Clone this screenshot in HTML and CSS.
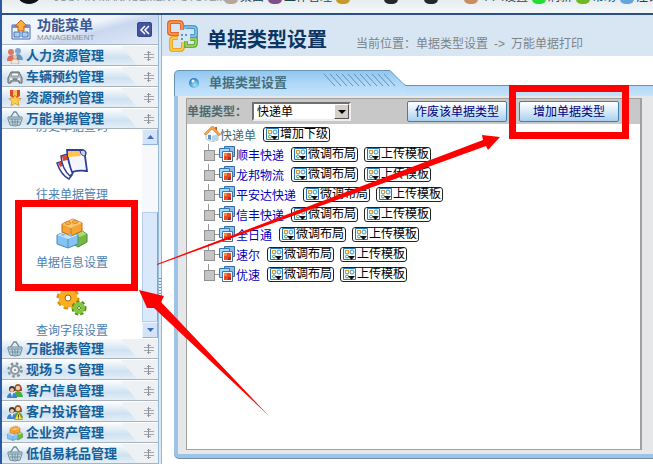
FILE: index.html
```
<!DOCTYPE html>
<html lang="zh-CN">
<head>
    <meta charset="UTF-8">
    <meta name="viewport" content="width=device-width, initial-scale=1.0">
    <title>单据类型设置</title>
    <link rel="stylesheet" href="styles.css">
</head>
<body>
    <!-- shared icons -->
    <svg class="defs" width="0" height="0">
        <defs>
            <linearGradient id="tabFill" x1="0" y1="0" x2="0" y2="1">
                <stop offset="0" stop-color="#8fc6f1"/>
                <stop offset="0.5" stop-color="#b0d8f8"/>
                <stop offset="1" stop-color="#c4e3fb"/>
            </linearGradient>
            <radialGradient id="ball" cx="0.6" cy="0.7" r="0.7">
                <stop offset="0" stop-color="#a5e4ff"/>
                <stop offset="1" stop-color="#2479b8"/>
            </radialGradient>
            <symbol id="basket" viewBox="0 0 16 16">
                <path d="M3 7 7 1h2l4 6" fill="none" stroke="#6d8796" stroke-width="1.3"/>
                <path d="M1 6h14v2l-2 6q-5 2-10 0L1 8z" fill="#c4d6df" stroke="#718b9b"/>
                <path d="M2 8h12M3 11h10M5 8l1 6M8 8v6M11 8l-1 6" stroke="#71909f" fill="none"/>
            </symbol>
            <symbol id="people" viewBox="0 0 16 16">
                <circle cx="4" cy="4" r="3" fill="#dc7667"/><path d="M0 13q0-6 5-6t5 6z" fill="#d8705c"/>
                <circle cx="11" cy="3" r="3" fill="#81a8cf"/><path d="M7 12q0-6 4-6t5 6z" fill="#6994bf"/>
                <circle cx="8" cy="9" r="2" fill="#f0c4a0"/><path d="M4 16q0-5 4-5t4 5z" fill="#f1e5db" stroke="#be8267" stroke-width=".5"/>
            </symbol>
            <symbol id="car" viewBox="0 0 16 16">
                <path d="m2 7 2-4h8l2 4 1 2v5h-3v-2H4v2H1V9z" fill="#b8bfc4" stroke="#59646d"/>
                <path d="m4 7 1-3h6l1 3z" fill="#f5f9fc" stroke="#59646d" stroke-width=".6"/>
                <path d="M3 10h2M11 10h2" stroke="#fff" stroke-width="1.5"/><path d="M6 10h4" stroke="#49545c"/>
            </symbol>
            <symbol id="medal" viewBox="0 0 16 16">
                <path d="M3 0h10v6L8 9 3 6z" fill="#dd492a"/><path d="M6 0h4v6H6z" fill="#fac25d"/>
                <path d="m8 5 2 3 4 .5-3 3 1 4-4-2-4 2 1-4-3-3L6 8z" fill="#ffd44b" stroke="#df8a25" stroke-width=".8"/>
            </symbol>
            <symbol id="gear" viewBox="0 0 16 16">
                <circle cx="8" cy="8" r="6.5" fill="none" stroke="#89939b" stroke-width="2.5" stroke-dasharray="2.6 2.5"/>
                <circle cx="8" cy="8" r="4" fill="#ecf0f2" stroke="#8d979e" stroke-width="2"/>
                <circle cx="8" cy="8" r="1" fill="#7c8890"/>
            </symbol>
            <symbol id="users" viewBox="0 0 16 16">
                <path d="M7 8q0-7 4-7t4 7z" fill="#94512d"/><circle cx="11" cy="5" r="2.2" fill="#f7cfa5"/>
                <path d="M7 14q0-6 4-6t5 6z" fill="#52a93e"/>
                <circle cx="5" cy="6" r="3" fill="#46352e"/><circle cx="5" cy="7" r="2" fill="#f4c49d"/>
                <path d="M0 15q0-5 5-5t5 5z" fill="#3e83ce"/><path d="m4 10 1 4 1-4z" fill="#fff"/>
            </symbol>
            <symbol id="warn" viewBox="0 0 16 16">
                <use href="#users"/>
                <path d="m11.500 8 4 7.500h-8z" fill="#ffe13b" stroke="#8e8917" stroke-width=".7"/>
                <path d="M11.500 10.500v2.500M11.500 13.500v1" stroke="#4c4713"/>
            </symbol>
            <symbol id="blocks" viewBox="0 0 32 32">
                <path d="m19 18 7-4 5 3v8l-9 5-3-2z" fill="#76b83d" stroke="#49842d"/>
                <path d="m19 18 5 2 7-3-5-3z" fill="#a8db6c"/>
                <path d="m1 18 10-4 11 4v9l-10 4-11-4z" fill="#85c3f2" stroke="#4687b8"/>
                <path d="m1 18 10-4 11 4-10 4z" fill="#c0e5ff"/><path d="M12 22v9" stroke="#4b91c3"/>
                <path d="m6 7 11-5 9 4v8l-11 5-9-4z" fill="#f5a334" stroke="#b8701e"/>
                <path d="m6 7 11-5 9 4-11 5z" fill="#ffc86f"/><path d="M15 11v8" stroke="#c77b22"/>
                <ellipse cx="12" cy="6" rx="3" ry="1.500" fill="#f8ae44" stroke="#c77b22" stroke-width=".7"/>
                <ellipse cx="19" cy="5" rx="3" ry="1.500" fill="#f8ae44" stroke="#c77b22" stroke-width=".7"/>
                <ellipse cx="7" cy="18" rx="2" ry="1" fill="#81bfe9"/><ellipse cx="14" cy="18" rx="2" ry="1" fill="#81bfe9"/>
            </symbol>
            <symbol id="papers" viewBox="0 0 32 32">
                <path d="m1 14 7-2 8 14-3 4Q5 26 1 14z" fill="#fff" stroke="#343e93" stroke-width="1.500"/>
                <path d="m2 14 5-2 2 4-5 2z" fill="#d94a2f"/>
                <path d="m5 7 7-2 5 19-3 3Q6 20 5 7z" fill="#fff" stroke="#343e93" stroke-width="1.500"/>
                <path d="m6 7 5-1 1 5-5 1z" fill="#d94a2f"/>
                <path d="M11 1h16q4 1 2 6l2 15q-8-1-15 1Q12 13 11 1z" fill="#f4f6ff" stroke="#303d96" stroke-width="1.800"/>
                <path d="M12 2h12l1 5-13 1z" fill="#ffc64b"/><path d="M24 2q1 5 5 5 2-5-2-6z" fill="#c2d2f5" stroke="#303d96"/>
            </symbol>
            <symbol id="gears" viewBox="0 0 32 32">
                <circle cx="12" cy="13" r="9" fill="none" stroke="#de8b0b" stroke-width="5" stroke-dasharray="4 3"/>
                <circle cx="12" cy="13" r="6" fill="#fff" stroke="#f9af21" stroke-width="7"/>
                <circle cx="12" cy="13" r="3" fill="#fff" stroke="#a66100"/>
                <circle cx="23" cy="23" r="6" fill="none" stroke="#4b8e16" stroke-width="3" stroke-dasharray="3 2"/>
                <circle cx="23" cy="23" r="4" fill="#fff" stroke="#85c63b" stroke-width="4"/>
                <circle cx="23" cy="23" r="1.500" fill="#fff" stroke="#3e7c15"/>
            </symbol>
            <symbol id="pin" viewBox="0 0 12 12">
                <path d="M1 4.500h10M1 7.500h10M4 2.500h4M4 9.500h4" stroke="#a0a6ab" fill="none"/>
                <path d="M5.500 1v10" stroke="#8b9196" fill="none"/>
            </symbol>
            <symbol id="node" viewBox="0 0 16 16">
                <path d="M5.500 .5h10v10h-10z" fill="#8fb9e0" stroke="#336ca8"/>
                <path d="M.5 2.500h10v9H.5z" fill="#a8daf8" stroke="#3478b4"/>
                <path d="M3.500 5.500h10v10h-10z" fill="#fff" stroke="#4473a2"/>
                <path d="M5 7h7v7H5z" fill="#e74b27"/><path d="M5 7h3v3H5z" fill="#f28c3c"/><path d="M9 11h3v3H9z" fill="#b92b20"/>
            </symbol>
            <symbol id="tile" viewBox="0 0 13 13">
                <path d="M.5 .5h12v11H.5z" fill="#eef8ff" stroke="#2874ad"/>
                <rect x="2.500" y="2.500" width="3" height="3" fill="none" stroke="#e19a2e"/>
                <circle cx="9" cy="4" r="2" fill="none" stroke="#3c94cc"/>
                <circle cx="4" cy="8.500" r="1.500" fill="none" stroke="#47a848"/>
                <path d="M5 8h7l-3.500 4z" fill="#111"/>
            </symbol>
        </defs>
    </svg>

    <header class="topbar">
        <span class="logo"></span>
        <span class="system">JUST-IN MANAGEMENT SYSTEM</span>
        <nav class="topnav">
            <span><i class="dot"></i>桌面</span>
            <span><i class="dot purple"></i>工作管理</span>
            <span><i class="dot gold"></i></span>
            <span><i class="dot black"></i></span>
            <span><i class="dot black"></i></span>
            <span><i class="dot tan"></i>个人设置</span>
            <span><i class="dot green"></i>刷新</span>
            <span><i class="dot leaf"></i>帮助</span>
            <span><i class="dot blue"></i>注销</span>
        </nav>
    </header>

    <div class="layout">
        <aside class="sidebar">
            <div class="side-head">
                <svg class="head-icon" width="20" height="20" viewBox="0 0 20 20">
                    <path d="M1 5h18v14H1z" fill="#eaf3ff" stroke="#4265a8"/>
                    <path d="M1 5h18v3H1z" fill="#7394cf"/>
                    <path d="M3 12h6v5H3zM11 12h6v5h-6z" fill="#a8cdf1" stroke="#4c75b4"/>
                    <path d="m10 0 6 6h-3v5H7V6H4z" fill="#ffae43" stroke="#b9651d"/>
                </svg>
                <div class="head-text">
                    <strong>功能菜单</strong>
                    <small>MANAGEMENT</small>
                </div>
                <button class="collapse" aria-label="收起">
                    <svg width="10" height="10" viewBox="0 0 10 10"><path d="M5 1 1 5l4 4M9 1 5 5l4 4" fill="none" stroke="#fff" stroke-width="1.500"/></svg>
                </button>
            </div>
            <a class="menu" href="#"><svg><use href="#people"/></svg><span>人力资源管理</span><svg class="pin"><use href="#pin"/></svg></a>
            <a class="menu" href="#"><svg><use href="#car"/></svg><span>车辆预约管理</span><svg class="pin"><use href="#pin"/></svg></a>
            <a class="menu" href="#"><svg><use href="#medal"/></svg><span>资源预约管理</span><svg class="pin"><use href="#pin"/></svg></a>
            <a class="menu" href="#"><svg><use href="#basket"/></svg><span>万能单据管理</span><svg class="pin"><use href="#pin"/></svg></a>
            <div class="submenu">
                <div class="sub-list">
                    <a href="#"><svg><use href="#papers"/></svg>历史单据查询</a>
                    <a href="#"><svg><use href="#papers"/></svg>往来单据管理</a>
                    <a href="#"><svg><use href="#blocks"/></svg>单据信息设置</a>
                    <a href="#"><svg><use href="#gears"/></svg>查询字段设置</a>
                </div>
                <div class="scroll">
                    <button aria-label="向上"><svg width="7" height="4" viewBox="0 0 7 4"><path d="M0 4 3.500 0 7 4z" fill="#3d6fb5"/></svg></button>
                    <span class="thumb"></span>
                    <button aria-label="向下"><svg width="7" height="4" viewBox="0 0 7 4"><path d="M0 0 3.500 4 7 0z" fill="#3d6fb5"/></svg></button>
                </div>
            </div>
            <a class="menu" href="#"><svg><use href="#basket"/></svg><span>万能报表管理</span><svg class="pin"><use href="#pin"/></svg></a>
            <a class="menu" href="#"><svg><use href="#gear"/></svg><span>现场５Ｓ管理</span><svg class="pin"><use href="#pin"/></svg></a>
            <a class="menu" href="#"><svg><use href="#users"/></svg><span>客户信息管理</span><svg class="pin"><use href="#pin"/></svg></a>
            <a class="menu" href="#"><svg><use href="#warn"/></svg><span>客户投诉管理</span><svg class="pin"><use href="#pin"/></svg></a>
            <a class="menu" href="#"><svg><use href="#blocks"/></svg><span>企业资产管理</span><svg class="pin"><use href="#pin"/></svg></a>
            <a class="menu" href="#"><svg><use href="#basket"/></svg><span>低值易耗品管理</span><svg class="pin"><use href="#pin"/></svg></a>
        </aside>

        <div class="splitter"><span></span></div>

        <main class="main">
            <div class="page-head">
                <svg width="31" height="32" viewBox="0 0 31 32" fill="none" stroke-width="4">
                    <path d="M12 14H4q-2 0-2-2V4q0-2 2-2h8q3 0 3 3v5" stroke="#e56a25"/>
                    <path d="M18 9V7h8q3 0 3 3v6h-6" stroke="#4d9bd3"/>
                    <path d="M11 18H6q-2 0-2 2v8q0 2 2 2h7q3 0 3-3v-5" stroke="#f0a91e"/>
                    <path d="M19 21v5h7q3 0 3-3v-4h-6" stroke="#6aae3b"/>
                    <g stroke-width="1">
                        <path d="M12 14H4q-2 0-2-2V4q0-2 2-2h8q3 0 3 3v5" stroke="#ffb584"/>
                        <path d="M18 9V7h8q3 0 3 3v6h-6" stroke="#a4d6f6"/>
                        <path d="M11 18H6q-2 0-2 2v8q0 2 2 2h7q3 0 3-3v-5" stroke="#ffe37c"/>
                        <path d="M19 21v5h7q3 0 3-3v-4h-6" stroke="#bce18b"/>
                    </g>
                    <path d="M14 14h2v2h-2zM18 14h2v2h-2zM14 18h2v2h-2z" fill="#4d9bd3"/>
                </svg>
                <h1>单据类型设置</h1>
                <p>当前位置：单据类型设置<span>-&gt;</span>万能单据打印</p>
            </div>

            <section class="panel">
                <div class="panel-head">
                    <div class="tab">
                        <svg class="tab-shape" width="232" height="26" viewBox="0 0 232 26">
                            <path d="M.5 26V5Q.5 .5 5 .5h211l13 13q2 2 3 2V26z" fill="url(#tabFill)"/>
                            <path d="M.5 26V5Q.5 .5 5 .5h211l13 13q2 2 3 2" fill="none" stroke="#6693b0"/>
                            <path d="m150 4 11 12m-5-12 11 12m-5-12 11 12m-5-12 11 12m-5-12 11 12m-5-12 11 12m-5-12 11 12m-5-12 11 12m-5-12 11 12m-5-12 11 12m-5-12 11 12" stroke="#5f91b6" fill="none"/>
                        </svg>
                        <svg class="ball" width="10" height="10" viewBox="0 0 10 10"><circle cx="5" cy="5" r="5" fill="url(#ball)"/><circle cx="4" cy="3" r="1.500" fill="#e7f8ff"/></svg>
                        <h2>单据类型设置</h2>
                    </div>
                    <div class="strip"></div>
                </div>
                <div class="panel-body">
                    <div class="content">
                        <div class="toolbar">
                            <label for="type">单据类型：</label>
                            <div class="select">
                                <select id="type"><option>快递单</option></select>
                                <span class="arrow"></span>
                            </div>
                            <button class="btn">作废该单据类型</button>
                            <button class="btn">增加单据类型</button>
                        </div>
                        <ul class="tree">
                            <li class="root">
                                <svg viewBox="0 0 16 16">
                                    <path d="m2 8 6-6 6 6v6l-6 2-6-3z" fill="#f4f7fa" stroke="#9aadbd" stroke-width=".7"/>
                                    <path d="M8 15v-5l6-2v6z" fill="#b9d5ed"/><path d="M4 9h3v5l-3-1z" fill="#5392ce"/>
                                    <path d="M11 1h2v4h-2z" fill="#cc5434"/>
                                    <path d="M0 8 7 1l2-1 7 8-1 2-7-7-6 6z" fill="#f5a343" stroke="#bb732d" stroke-width=".5"/>
                                </svg>
                                <span>快递单</span>
                                <button class="mini"><svg><use href="#tile"/></svg>增加下级</button>
                            </li>
                            <li><i class="joint"></i><svg><use href="#node"/></svg><a href="#">顺丰快递</a><button class="mini"><svg><use href="#tile"/></svg>微调布局</button><button class="mini"><svg><use href="#tile"/></svg>上传模板</button></li>
                            <li><i class="joint"></i><svg><use href="#node"/></svg><a href="#">龙邦物流</a><button class="mini"><svg><use href="#tile"/></svg>微调布局</button><button class="mini"><svg><use href="#tile"/></svg>上传模板</button></li>
                            <li><i class="joint"></i><svg><use href="#node"/></svg><a href="#">平安达快递</a><button class="mini"><svg><use href="#tile"/></svg>微调布局</button><button class="mini"><svg><use href="#tile"/></svg>上传模板</button></li>
                            <li><i class="joint"></i><svg><use href="#node"/></svg><a href="#">信丰快递</a><button class="mini"><svg><use href="#tile"/></svg>微调布局</button><button class="mini"><svg><use href="#tile"/></svg>上传模板</button></li>
                            <li><i class="joint"></i><svg><use href="#node"/></svg><a href="#">全日通</a><button class="mini"><svg><use href="#tile"/></svg>微调布局</button><button class="mini"><svg><use href="#tile"/></svg>上传模板</button></li>
                            <li><i class="joint"></i><svg><use href="#node"/></svg><a href="#">速尔</a><button class="mini"><svg><use href="#tile"/></svg>微调布局</button><button class="mini"><svg><use href="#tile"/></svg>上传模板</button></li>
                            <li><i class="joint"></i><svg><use href="#node"/></svg><a href="#">优速</a><button class="mini"><svg><use href="#tile"/></svg>微调布局</button><button class="mini"><svg><use href="#tile"/></svg>上传模板</button></li>
                        </ul>
                    </div>
                </div>
            </section>
        </main>
    </div>

    <!-- red boxes and arrows over the page -->
    <svg class="marks" width="653" height="464" viewBox="0 0 653 464">
        <path d="M18.500 203.500h116v84h-116zM512.500 88.500h113v47h-113z" fill="none" stroke="#fe0000" stroke-width="7"/>
        <path d="m157 264 326-124-1-5 18 2-12 13-2-4L157 265zM139 290l25 6-3 6 108 114-115-108-7 0z" fill="#fe0000"/>
    </svg>
</body>
</html>
```
FILE: styles.css
```
* {
    box-sizing: border-box;
}

body {
    margin: 0;
    height: 100vh;
    display: flex;
    flex-direction: column;
    overflow: hidden;
    background: #fff;
    font-family: "Liberation Sans", "Noto Sans CJK SC", sans-serif;
    font-size: 12px;
    line-height: 14px;
}

svg {
    display: block;
    flex: none;
}

a {
    text-decoration: none;
}

button {
    font-family: inherit;
    font-size: 12px;
    line-height: 14px;
    padding: 0;
    cursor: pointer;
}

.defs {
    position: absolute;
}

/* top bar */
.topbar {
    flex: none;
    height: 15px;
    padding: 0 0 9px 14px;
    display: flex;
    align-items: flex-end;
    overflow: hidden;
    background: linear-gradient(#e7ecef, #f3f8fa);
    border-left: 2px solid #2a58a5;
    border-bottom: 2px solid #2b4f86;
    white-space: nowrap;
}

.logo {
    flex: none;
    width: 26px;
    height: 26px;
    margin-right: 12px;
    border-radius: 50%;
    background: #111;
}

.system {
    flex: none;
    width: 170px;
    font-size: 11px;
    color: #8b969c;
}

.topnav {
    flex: none;
    display: flex;
    gap: 4px;
    color: #1d4654;
}

.topnav span {
    display: flex;
    align-items: flex-end;
    gap: 2px;
}

.dot {
    width: 14px;
    height: 14px;
    border-radius: 5px;
    background: #b3a89a;
}

.purple { background: #7d5089; }
.gold { background: #c69a28; margin-right: 30px; }
.black { background: #24282b; margin-right: 22px; }
.tan { background: #c88e63; }
.green { background: #25dc35; }
.leaf { background: #70b728; }
.blue { background: #67a4d7; }

/* sidebar */
.layout {
    flex: 1;
    min-height: 0;
    display: flex;
}

.sidebar {
    flex: none;
    width: 158px;
    display: flex;
    flex-direction: column;
    border-left: 2px solid #2a58a5;
}

.side-head {
    height: 30px;
    padding: 0 6px 0 9px;
    display: flex;
    align-items: center;
    gap: 6px;
    background: linear-gradient(165deg, #f0f4fb 45%, #c9d7ef 60%, #e3eaf7);
    border-bottom: 1px solid #a9b6c6;
}

.head-text {
    flex: 1;
}

.head-text strong,
.head-text small {
    display: block;
}

.head-text strong {
    font-size: 14px;
    line-height: 16px;
    color: #3c5793;
}

.head-text small {
    font-size: 8px;
    line-height: 9px;
    color: #8b929b;
}

.collapse {
    width: 15px;
    height: 15px;
    display: grid;
    place-items: center;
    background: #4355a0;
    border: 1px solid #35468d;
    border-radius: 2px;
}

.menu {
    flex: none;
    height: 21px;
    padding: 0 3px 0 5px;
    display: flex;
    align-items: center;
    gap: 3px;
    font-size: 13px;
    font-weight: bold;
    color: #14609a;
    background: linear-gradient(50deg, transparent 78%, #eef1f4 79%), linear-gradient(#fbfcfd, #cfe2f2 60%, #e4eef6);
    border-top: 1px solid #fff;
    border-bottom: 1px solid #aab2ba;
}

.menu svg {
    width: 16px;
    height: 16px;
}

.menu span {
    flex: 1;
}

.menu .pin {
    width: 12px;
    height: 12px;
}

.submenu {
    flex: 1;
    min-height: 0;
    display: flex;
}

.sub-list {
    flex: 1;
    display: flex;
    flex-direction: column;
    justify-content: flex-end;
    gap: 15px;
    overflow: hidden;
}

.sub-list a {
    display: flex;
    flex-direction: column;
    align-items: center;
    gap: 7px;
    color: #4c7fb2;
}

.sub-list svg {
    width: 32px;
    height: 32px;
}

.scroll {
    width: 16px;
    display: flex;
    flex-direction: column;
    background: #f6f8fc;
}

.scroll button {
    height: 16px;
    display: grid;
    place-items: center;
    background: #d3e4fa;
    border: 1px solid #eef5ff;
    border-right-color: #8fb2df;
    border-bottom-color: #8fb2df;
}

.thumb {
    height: 110px;
    margin-top: auto;
    background: #dae8fb;
    border: 1px solid #b5cdee;
    border-right-color: #7ea5d8;
}

.splitter {
    flex: none;
    width: 4px;
    display: flex;
    align-items: center;
    background: #dceaf7;
    border-left: 1px solid #9ab9d6;
    border-right: 1px solid #8fb2d0;
}

.splitter span {
    width: 100%;
    height: 24px;
    margin-top: 100px;
    background: repeating-linear-gradient(#6896be 0 1px, #e5f1fb 1px 3px);
}

/* main area */
.main {
    flex: 1;
    min-width: 0;
    display: flex;
    flex-direction: column;
}

.page-head {
    height: 41px;
    padding-left: 5px;
    display: flex;
    align-items: center;
    background: #d8e6f3;
}

.page-head h1 {
    margin: 8px 0 0 9px;
    font-size: 20px;
    line-height: 24px;
    color: #0c3564;
}

.page-head p {
    margin: 16px 0 0 29px;
    color: #7d8489;
}

.page-head p span {
    margin: 0 6px;
}

.panel {
    flex: 1;
    min-height: 0;
    margin: 14px 0 6px 12px;
    display: flex;
    flex-direction: column;
}

.panel-head {
    display: flex;
    align-items: flex-end;
}

.tab {
    position: relative;
    width: 232px;
    height: 26px;
    padding-left: 15px;
    display: flex;
    align-items: center;
    gap: 10px;
}

.tab-shape {
    position: absolute;
    top: 0;
    left: 0;
}

.ball {
    position: relative;
}

.tab h2 {
    position: relative;
    margin: 0;
    font-size: 13px;
    color: #45707e;
}

.strip {
    flex: 1;
    height: 11px;
    background: linear-gradient(#b0d8f8, #c4e3fb);
    border-top: 1px solid #6693b0;
}

.panel-body {
    flex: 1;
    min-height: 0;
    padding: 2px 11px 4px 8px;
    background: #e5e7e9;
    border: solid #9dc4e8;
    border-width: 0 0 4px 4px;
    border-bottom-left-radius: 5px;
    box-shadow: 0 1px 0 #7390ab;
}

.content {
    height: 100%;
    background: #fff;
    border: 1px solid #a0a0a0;
    border-right-width: 2px;
}

.toolbar {
    height: 25px;
    padding-right: 21px;
    display: flex;
    align-items: center;
    background: #c8c8c8;
}

.toolbar label {
    width: 65px;
    font-weight: bold;
    color: #4c6b70;
}

.select {
    position: relative;
    width: 99px;
    margin-right: auto;
}

.select select {
    display: block;
    width: 100%;
    height: 19px;
    padding: 0 3px;
    appearance: none;
    font-family: inherit;
    font-size: 12px;
    color: #000;
    background: #fff;
    border: 2px solid #707070;
    border-right-color: #eee;
    border-bottom-color: #eee;
    border-radius: 0;
}

.arrow {
    position: absolute;
    top: 2px;
    right: 2px;
    width: 15px;
    height: 15px;
    display: grid;
    place-items: center;
    background: #d4d0c8;
    border: 1px solid #fff;
    border-right-color: #555;
    border-bottom-color: #555;
    pointer-events: none;
}

.arrow::before {
    content: "";
    border: 4px solid transparent;
    border-top-color: #000;
    border-bottom: 0;
}

.btn {
    width: 100px;
    height: 21px;
    margin-left: 12px;
    color: #000080;
    background: linear-gradient(#fff, #d6e9f9 50%, #a9d0ee);
    border: 1px solid #3c7fb1;
    border-radius: 2px;
}

.tree {
    margin: 0;
    padding: 0 0 0 17px;
    list-style: none;
}

.tree li {
    height: 20px;
    display: flex;
    align-items: center;
}

.tree svg {
    width: 16px;
    height: 16px;
}

.tree .root {
    color: #426a70;
}

.tree span,
.tree a {
    padding-top: 3px;
}

.tree a {
    margin-left: 1px;
    color: #0000bb;
}

.joint {
    position: relative;
    width: 15px;
    height: 20px;
    background: linear-gradient(#999, #999) 4px 0 / 1px 6px no-repeat,
        linear-gradient(#999, #999) 9px 10px / 6px 1px no-repeat;
}

.joint::before {
    content: "";
    position: absolute;
    top: 6px;
    left: 0;
    width: 9px;
    height: 9px;
    background: #c4c4c4;
    border: 1px solid #929292;
}

.tree .mini {
    height: 15px;
    width: 67px;
    margin-left: 7px;
    padding: 0 2px;
    display: flex;
    align-items: center;
    gap: 1px;
    white-space: nowrap;
    color: #000;
    background: #fff;
    border: 1px solid #222;
    border-radius: 3px;
}

.tree .mini + .mini {
    margin-left: 6px;
}

.tree .mini svg {
    width: 13px;
    height: 13px;
}

.marks {
    position: absolute;
    top: 0;
    left: 0;
    pointer-events: none;
}
```
